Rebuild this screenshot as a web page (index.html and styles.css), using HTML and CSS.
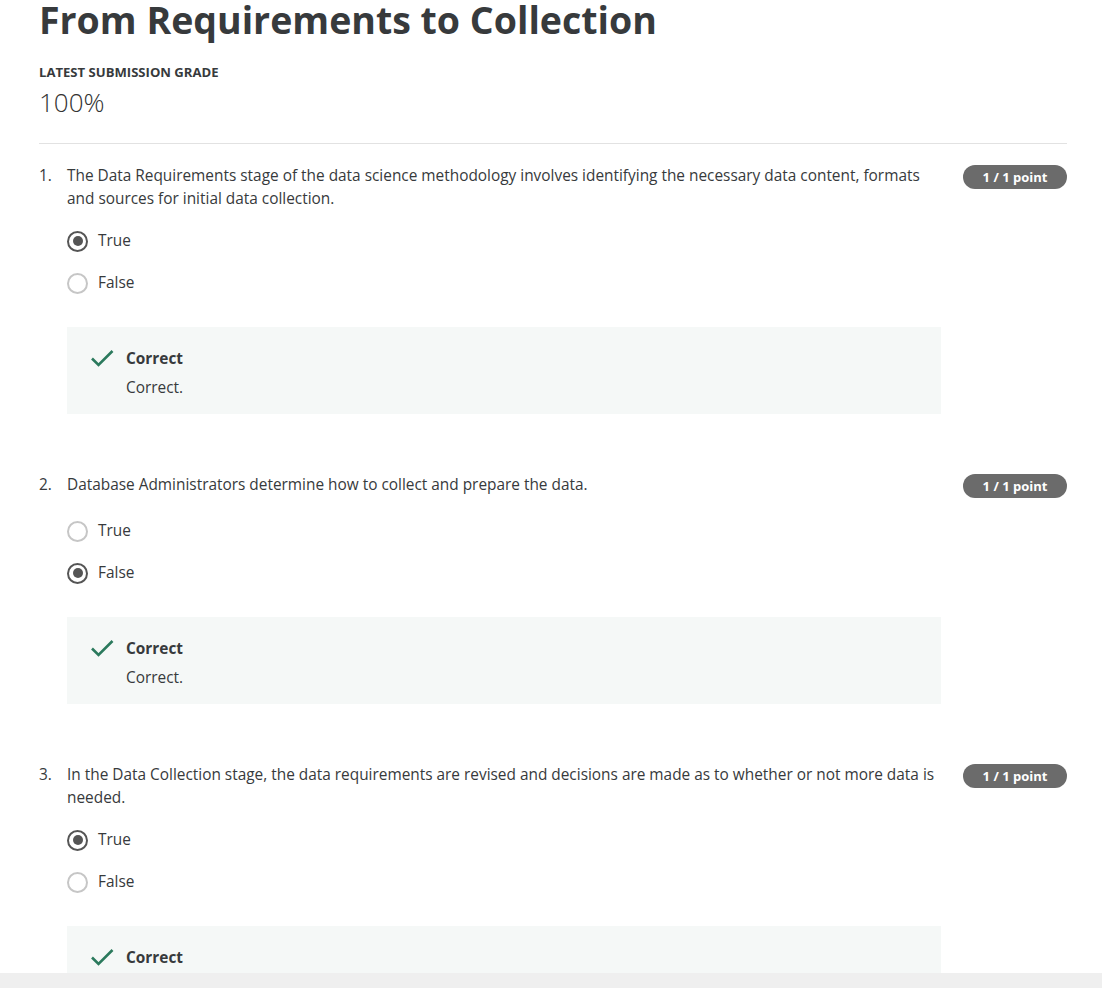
FILE: index.html
```html
<!DOCTYPE html>
<html lang="en">
<head>
<meta charset="utf-8">
<title>From Requirements to Collection</title>
<link rel="stylesheet" href="styles.css">
</head>
<body>
<main class="page">
  <h1 class="title">From Requirements to Collection</h1>
  <div class="grade-label">LATEST SUBMISSION GRADE</div>
  <div class="grade-value">100%</div>
  <hr class="divider">

  <section class="question">
    <div class="q-head">
      <span class="q-num">1.</span>
      <p class="q-text">The Data Requirements stage of the data science methodology involves identifying the necessary data content, formats and sources for initial data collection.</p>
      <span class="badge">1 / 1 point</span>
    </div>
    <div class="q-body">
      <div class="option"><span class="radio checked"></span><span class="opt-label">True</span></div>
      <div class="option"><span class="radio"></span><span class="opt-label">False</span></div>
      <div class="feedback">
        <svg class="check" viewBox="0 0 24 18" width="24" height="18"><path d="M2 9.5 L8.5 16 L22.5 2" fill="none" stroke="#2b7a5d" stroke-width="2.6"/></svg>
        <div class="fb-text">
          <div class="fb-title">Correct</div>
          <div class="fb-msg">Correct.</div>
        </div>
      </div>
    </div>
  </section>

  <section class="question">
    <div class="q-head">
      <span class="q-num">2.</span>
      <p class="q-text">Database Administrators determine how to collect and prepare the data.</p>
      <span class="badge">1 / 1 point</span>
    </div>
    <div class="q-body">
      <div class="option"><span class="radio"></span><span class="opt-label">True</span></div>
      <div class="option"><span class="radio checked"></span><span class="opt-label">False</span></div>
      <div class="feedback">
        <svg class="check" viewBox="0 0 24 18" width="24" height="18"><path d="M2 9.5 L8.5 16 L22.5 2" fill="none" stroke="#2b7a5d" stroke-width="2.6"/></svg>
        <div class="fb-text">
          <div class="fb-title">Correct</div>
          <div class="fb-msg">Correct.</div>
        </div>
      </div>
    </div>
  </section>

  <section class="question">
    <div class="q-head">
      <span class="q-num">3.</span>
      <p class="q-text">In the Data Collection stage, the data requirements are revised and decisions are made as to whether or not more data is needed.</p>
      <span class="badge">1 / 1 point</span>
    </div>
    <div class="q-body">
      <div class="option"><span class="radio checked"></span><span class="opt-label">True</span></div>
      <div class="option"><span class="radio"></span><span class="opt-label">False</span></div>
      <div class="feedback">
        <svg class="check" viewBox="0 0 24 18" width="24" height="18"><path d="M2 9.5 L8.5 16 L22.5 2" fill="none" stroke="#2b7a5d" stroke-width="2.6"/></svg>
        <div class="fb-text">
          <div class="fb-title">Correct</div>
          <div class="fb-msg">Correct.</div>
        </div>
      </div>
    </div>
  </section>
</main>
<div class="bottom-bar"></div>
</body>
</html>
```
FILE: styles.css
```css
* { box-sizing: border-box; }
html, body { margin: 0; padding: 0; background: #fff; }
body {
  font-family: "Open Sans", "Liberation Sans", sans-serif;
  color: #373a3c;
  overflow: hidden;
}
.page {
  padding: 0 35px 0 39px;
}
.title {
  margin: -2px 0 0;
  font-size: 37.5px;
  line-height: 44px;
  font-weight: 700;
  color: #373a3c;
}
.grade-label {
  margin-top: 21px;
  font-size: 13.1px;
  line-height: 18px;
  font-weight: 700;
}
.grade-value {
  margin-top: 5px;
  font-size: 26px;
  line-height: 32px;
  font-weight: 300;
  color: #333;
}
.divider {
  margin: 25px 0 0;
  border: 0;
  border-top: 1px solid #e2e2e2;
  height: 0;
}
.question {
  margin-top: 20px;
  margin-bottom: 59px;
}
.q-head {
  display: flex;
  align-items: flex-start;
}
.q-num {
  width: 28px;
  flex: none;
  font-size: 15.4px;
  line-height: 23px;
}
.q-text {
  flex: 1;
  margin: 0;
  font-size: 15.4px;
  line-height: 23px;
}
.badge {
  flex: none;
  margin: 1px 0 2px 22px;
  width: 104px;
  height: 24px;
  border-radius: 12px;
  background: #6b6b6b;
  color: #fff;
  font-size: 13px;
  font-weight: 700;
  line-height: 24px;
  text-align: center;
}
.q-body {
  margin-left: 28px;
  width: 874px;
  padding-top: 19px;
}
.option {
  display: flex;
  align-items: center;
  height: 24px;
  margin-bottom: 18px;
}
.radio {
  width: 21px;
  height: 21px;
  border-radius: 50%;
  border: 2px solid #c6c6c6;
  flex: none;
  position: relative;
}
.radio.checked {
  border: 2.5px solid #555;
}
.radio.checked::after {
  content: "";
  position: absolute;
  left: 50%;
  top: 50%;
  width: 10px;
  height: 10px;
  margin: -5px 0 0 -5px;
  border-radius: 50%;
  background: #555;
}
.opt-label {
  margin-left: 10px;
  font-size: 15.4px;
  line-height: 24px;
}
.feedback {
  margin-top: 32px;
  background: #f5f8f7;
  padding: 20px 24px 14px 23px;
  display: flex;
  align-items: flex-start;
  min-height: 87px;
}
.check {
  flex: none;
  margin-top: 2px;
}
.fb-text {
  margin-left: 12px;
}
.fb-title {
  font-size: 15.4px;
  line-height: 24px;
  font-weight: 700;
}
.fb-msg {
  margin-top: 5px;
  font-size: 15.4px;
  line-height: 24px;
}
.bottom-bar {
  position: fixed;
  left: 0;
  right: 0;
  bottom: 0;
  height: 15px;
  background: #efefef;
}
```
